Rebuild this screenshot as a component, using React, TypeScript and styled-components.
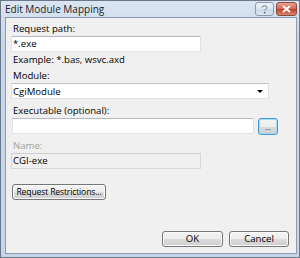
import React from 'react'
import styled, { createGlobalStyle } from 'styled-components'

const GlobalStyle = createGlobalStyle`
  html, body {
    margin: 0;
    padding: 0;
    background: #ffffff;
  }
  * {
    box-sizing: border-box;
  }
`;

const Window = styled.div`
  width: 300px;
  height: 258px;
  border: 1px solid #6b7889;
  background: linear-gradient(#dbe5f1, #c8d7e9 40px, #c6d5e7);
  display: flex;
  flex-direction: column;
  font-family: "Open Sans", "Noto Sans", sans-serif;
  font-size: 9.6px;
  color: #000;
`;

const TitleBar = styled.div`
  height: 16px;
  display: flex;
  align-items: flex-start;
  padding-left: 4px;
`;

const Title = styled.div`
  flex: 1;
  line-height: 16px;
  font-size: 10px;
  color: #1e1e1e;
`;

const CaptionButton = styled.div<{ $close?: boolean }>`
  width: ${p => (p.$close ? '21px' : '19px')};
  height: 14px;
  margin-top: 1px;
  margin-right: 2px;
  border: 1px solid ${p => (p.$close ? '#8d4a43' : '#8b99ab')};
  border-radius: 3px;
  background: ${p =>
    p.$close
      ? 'linear-gradient(#e5a595, #d4604a 50%, #c0402a 51%, #d8856c)'
      : 'linear-gradient(#eef3f9, #dde6f1 50%, #cbd8e8 51%, #d9e4f1)'};
  display: flex;
  align-items: center;
  justify-content: center;
`;

const Client = styled.div`
  flex: 1;
  margin: 0 2px 3px 4px;
  border: 1px solid #8b9aae;
  background: #f0f0f0;
  padding: 4px 5px 0 5px;
  display: flex;
  flex-direction: column;
`;

const Label = styled.div<{ $disabled?: boolean; $top?: number }>`
  line-height: 14px;
  height: 14px;
  margin-top: ${p => p.$top ?? 0}px;
  color: ${p => (p.$disabled ? '#a0a0a0' : '#000')};
  padding-left: 2px;
  white-space: nowrap;
`;

const TextBox = styled.div<{ $width: number; $disabled?: boolean; $top?: number }>`
  width: ${p => p.$width}px;
  height: 16px;
  flex: none;
  margin-top: ${p => p.$top ?? 0}px;
  border: 1px solid ${p => (p.$disabled ? '#d7d7d7' : '#dfe3e8')};
  border-top-color: ${p => (p.$disabled ? '#cfcfcf' : '#b6bac0')};
  background: ${p => (p.$disabled ? '#f0f0f0' : '#ffffff')};
  line-height: 14px;
  padding-left: 1px;
`;

const Row = styled.div<{ $top?: number }>`
  display: flex;
  align-items: flex-start;
  gap: 4px;
  margin-top: ${p => p.$top ?? 0}px;
  padding-left: 1px;
`;

const Select = styled.div`
  width: 258px;
  height: 16px;
  border: 1px solid #dfe3e8;
  border-top-color: #c3c7cc;
  background: #ffffff;
  display: flex;
  align-items: center;
  justify-content: space-between;
  padding: 0 5px 0 1px;
`;

const Arrow = styled.div`
  width: 0;
  height: 0;
  border-left: 3px solid transparent;
  border-right: 3px solid transparent;
  border-top: 3px solid #000;
`;

const Button = styled.div<{ $width: number; $focus?: boolean }>`
  width: ${p => p.$width}px;
  height: ${p => (p.$focus ? 17 : 16)}px;
  flex: none;
  border: 1px solid ${p => (p.$focus ? '#3c9ad6' : '#767676')};
  border-radius: 3px;
  background: linear-gradient(#f4f4f4, #ececec 50%, #dcdcdc 51%, #cfcfcf);
  box-shadow: inset 0 0 0 1px ${p => (p.$focus ? '#a7dcf6' : '#fbfbfb')};
  display: flex;
  align-items: center;
  justify-content: center;
  line-height: 14px;
  white-space: nowrap;
`;

const ButtonText = styled.span<{ $tight?: boolean }>`
  font-size: ${p => (p.$tight ? '8.6px' : '9.6px')};
  letter-spacing: ${p => (p.$tight ? '-0.15px' : '0')};
`;

const Dots = styled.span`
  font-size: 8px;
  line-height: 8px;
  letter-spacing: -0.3px;
  color: #333;
`;

const Footer = styled.div`
  margin-top: auto;
  margin-bottom: 6px;
  display: flex;
  justify-content: flex-end;
  gap: 6px;
  padding-right: 2px;
`;

export default function App() {
  return (
    <>
      <GlobalStyle />
      <Window>
        <TitleBar>
          <Title>Edit Module Mapping</Title>
          <CaptionButton>
            <svg width="7" height="9" viewBox="0 0 7 9">
              <path d="M1 2.5 Q1 0.8 3.5 0.8 Q6 0.8 6 2.6 Q6 3.8 4.2 4.5 L3.6 5.2 L3.6 6" fill="none" stroke="#f8fbff" strokeWidth="1.6" />
              <path d="M1 2.5 Q1 0.8 3.5 0.8 Q6 0.8 6 2.6 Q6 3.8 4.2 4.5 L3.6 5.2 L3.6 6" fill="none" stroke="#3b4f6c" strokeWidth="0.8" />
              <rect x="2.9" y="7" width="1.4" height="1.4" fill="#3b4f6c" />
            </svg>
          </CaptionButton>
          <CaptionButton $close>
            <svg width="9" height="8" viewBox="0 0 9 8">
              <path d="M1 1 L8 7 M8 1 L1 7" stroke="#ffffff" strokeWidth="2" />
            </svg>
          </CaptionButton>
        </TitleBar>
        <Client>
          <Label>Request path:</Label>
          <TextBox $width={190}>*.exe</TextBox>
          <Label $top={1}>Example: *.bas, wsvc.axd</Label>
          <Label $top={2}>Module:</Label>
          <Select>
            <span>CgiModule</span>
            <Arrow />
          </Select>
          <Label $top={5}>Executable (optional):</Label>
          <Row>
            <TextBox $width={242} />
            <Button $width={20} $focus>
              <Dots>...</Dots>
            </Button>
          </Row>
          <Label $top={4} $disabled>Name:</Label>
          <TextBox $width={190} $disabled>CGI-exe</TextBox>
          <Row $top={15}>
            <Button $width={94}>
              <ButtonText $tight>Request Restrictions...</ButtonText>
            </Button>
          </Row>
          <Footer>
            <Button $width={61}>
              <ButtonText>OK</ButtonText>
            </Button>
            <Button $width={60}>
              <ButtonText>Cancel</ButtonText>
            </Button>
          </Footer>
        </Client>
      </Window>
    </>
  )
}
